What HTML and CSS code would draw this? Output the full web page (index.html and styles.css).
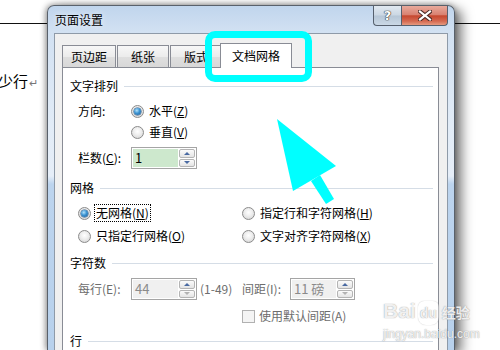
FILE: index.html
```html
<!DOCTYPE html>
<html lang="zh-CN">
<head>
<meta charset="utf-8">
<title>页面设置</title>
<link rel="stylesheet" href="styles.css">
</head>
<body>
<div class="doc">
  <div class="doc-rule"></div>
  <p class="doc-text">少行<span class="ret">↵</span></p>
</div>

<div class="dialog">
  <div class="titlebar">
    <span class="title">页面设置</span>
    <div class="caption">
      <span class="cap-btn help">?</span>
      <span class="cap-btn close">
        <svg width="14" height="11" viewBox="0 0 14 11"><path d="M2 1.5 L12 9.5 M12 1.5 L2 9.5" stroke="#4a2a26" stroke-width="4.2" stroke-linecap="square"/><path d="M2 1.5 L12 9.5 M12 1.5 L2 9.5" stroke="#ffffff" stroke-width="2.2" stroke-linecap="square"/></svg>
      </span>
    </div>
  </div>
  <div class="body">
    <div class="tabs">
      <span class="tab">页边距</span>
      <span class="tab">纸张</span>
      <span class="tab">版式</span>
      <span class="tab active">文档网格</span>
    </div>
    <div class="page">
      <div class="group g-text"><span>文字排列</span></div>
      <div class="row r-dir">
        <span class="lbl">方向:</span>
        <span class="radio checked"></span><span class="rtext">水平(<u>Z</u>)</span>
      </div>
      <div class="row r-vert">
        <span class="radio"></span><span class="rtext">垂直(<u>V</u>)</span>
      </div>
      <div class="row r-cols">
        <span class="lbl">栏数(<u>C</u>):</span>
        <div class="spin">
          <span class="spin-field hl">1</span>
          <span class="spin-btns"><span class="spin-btn"><i class="tri up"></i></span><span class="spin-btn"><i class="tri down"></i></span></span>
        </div>
      </div>

      <div class="group g-grid"><span>网格</span></div>
      <div class="row r-grid1">
        <div class="col1"><span class="radio checked"></span><span class="rtext focus">无网格(<u>N</u>)</span></div>
        <div class="col2"><span class="radio"></span><span class="rtext">指定行和字符网格(<u>H</u>)</span></div>
      </div>
      <div class="row r-grid2">
        <div class="col1"><span class="radio"></span><span class="rtext">只指定行网格(<u>O</u>)</span></div>
        <div class="col2"><span class="radio"></span><span class="rtext">文字对齐字符网格(<u>X</u>)</span></div>
      </div>

      <div class="group g-chars"><span>字符数</span></div>
      <div class="row r-chars disabled">
        <div class="col1">
          <span class="lbl">每行(E):</span>
          <div class="spin off">
            <span class="spin-field">44</span>
            <span class="spin-btns"><span class="spin-btn"><i class="tri up"></i></span><span class="spin-btn"><i class="tri down grey"></i></span></span>
          </div>
          <span class="range">(1-49)</span>
        </div>
        <div class="col2">
          <span class="lbl2">间距(I):</span>
          <div class="spin off narrow">
            <span class="spin-field">11 磅</span>
            <span class="spin-btns"><span class="spin-btn"><i class="tri up"></i></span><span class="spin-btn"><i class="tri down grey"></i></span></span>
          </div>
        </div>
      </div>
      <div class="row r-check disabled">
        <span class="check"></span><span class="ctext">使用默认间距(A)</span>
      </div>

      <div class="group g-lines"><span>行</span></div>
    </div>
  </div>
</div>

<div class="highlight"></div>
<svg class="arrow" width="500" height="350" viewBox="0 0 500 350">
  <polygon points="277,119 336,166 293,191" fill="#00ffff"/>
  <polygon points="311,181 320,175 334,199 326,204" fill="#00ffff"/>
</svg>

<div class="watermark">
  <div class="wm-top"><span>Bai</span><span class="wm-du">du</span><span class="wm-cn">经验</span></div>
  <div class="wm-url">jingyan.baidu.com</div>
</div>
</body>
</html>
```

FILE: styles.css
```css
* { box-sizing: border-box; }
html, body { margin: 0; padding: 0; }
body {
  width: 500px;
  height: 350px;
  overflow: hidden;
  position: relative;
  background: #fff;
  font-family: "Noto Sans CJK SC", "Microsoft YaHei", sans-serif;
  font-size: 12px;
  color: #000;
}

/* document behind the dialog */
.doc { padding-top: 23px; }
.doc-rule { height: 1px; background: #111; }
.doc-text {
  margin: 47px 0 0 -2px;
  font-size: 15px;
  line-height: 20px;
}
.ret { font-size: 11px; color: #777; margin-left: 1px; }

/* dialog window */
.dialog {
  position: absolute;
  left: 47px;
  top: 5px;
  width: 408px;
  height: 345px;
  border: 1px solid #59616b;
  border-bottom: 0;
  border-radius: 7px 7px 0 0;
  padding: 0 6px;
  display: flex;
  flex-direction: column;
  background: linear-gradient(180deg, #c0d5ed 0px, #d2e1f2 26px, #e2ecf7 120px, #e6eef8 170px, #bcd4ee 178px, #b8d1ec 100%);
  box-shadow: -1px 0 6px rgba(0,0,0,0.45), 7px 4px 12px rgba(0,0,0,0.5);
}
.titlebar {
  height: 27px;
  display: flex;
  justify-content: space-between;
  align-items: flex-start;
}
.title {
  padding: 7px 0 0 1px;
  line-height: 14px;
  text-shadow: 0 0 6px rgba(255,255,255,0.9);
}
.caption { display: flex; }
.cap-btn {
  height: 20px;
  display: flex;
  align-items: center;
  justify-content: center;
  border: 1px solid #56606e;
  border-top: 0;
}
.help {
  width: 28px;
  border-right: 0;
  border-radius: 0 0 0 4px;
  background: linear-gradient(180deg, #e1e9f1 0%, #cbd7e3 48%, #b6c6d6 52%, #cad8e6 100%);
  color: #fff;
  font-family: "DejaVu Sans", sans-serif;
  font-weight: bold;
  font-size: 13px;
  text-shadow: 0 0 1px #333, 0 0 1px #333, 0 0 1px #333;
}
.close {
  width: 47px;
  border-radius: 0 0 4px 0;
  background: linear-gradient(180deg, #e8aa9c 0%, #d98272 45%, #c6482f 52%, #d56a52 80%, #e59a80 100%);
}

.body {
  flex: 1;
  min-height: 0;
  display: flex;
  flex-direction: column;
  background: #f0f0f0;
  border: 1px solid #8e9aa8;
  border-bottom: 0;
  padding: 9px 8px 0 7px;
  overflow: hidden;
}

/* tabs */
.tabs {
  display: flex;
  align-items: flex-end;
  height: 24px;
  flex: none;
}
.tab {
  position: relative;
  height: 22px;
  min-width: 52px;
  padding: 0 8px;
  border: 1px solid #898c95;
  border-bottom: 0;
  text-align: center;
  line-height: 21px;
  background: linear-gradient(180deg, #f7f7f7 0%, #ececec 50%, #dfdfdf 51%, #d8d8d8 100%);
}
.tab + .tab { margin-left: 1px; }
.tab.active {
  height: 25px;
  margin-left: -2px;
  margin-bottom: -1px;
  padding: 1px 11px 0;
  line-height: 22px;
  background: #fff;
  z-index: 1;
}

.page {
  flex: 1;
  min-height: 0;
  overflow: hidden;
  background: #fff;
  border: 1px solid #898c95;
  border-bottom: 0;
  padding: 0 5px 0 7px;
}

/* group headings */
.group {
  display: flex;
  align-items: center;
  height: 20px;
  line-height: 20px;
}
.group::after {
  content: "";
  flex: 1;
  height: 1px;
  background: #d5dde6;
  margin-left: 6px;
}
.g-text { margin-top: 8px; }
.g-grid { margin-top: 9px; }
.g-chars { margin-top: 7px; }
.g-lines { margin-top: 5px; }

/* rows */
.row {
  display: flex;
  align-items: center;
  height: 20px;
  line-height: 16px;
  padding-left: 8px;
}
.r-dir { margin-top: 5px; }
.r-vert { margin-top: 1px; padding-left: 61px; }
.r-cols { margin-top: 5px; height: 22px; }
.r-grid1 { margin-top: 5px; }
.r-grid2 { margin-top: 3px; }
.r-chars { margin-top: 5px; height: 22px; }
.r-check { margin-top: 6px; padding-left: 172px; }

.lbl { width: 53px; }
.lbl2 { width: 48px; }
.col1 { width: 164px; display: flex; align-items: center; }
.col2 { display: flex; align-items: center; }

.disabled { color: #6d6d6d; }
.range { margin-left: 3px; }

/* radio buttons */
.radio {
  position: relative;
  flex: none;
  width: 13px;
  height: 13px;
  border-radius: 50%;
  border: 1px solid #8b8b8b;
  background: radial-gradient(circle at 50% 40%, #ffffff 0%, #ededed 45%, #cfcfcf 100%);
  margin-right: 3px;
}
.radio.checked::after {
  content: "";
  position: absolute;
  left: 2px;
  top: 2px;
  width: 7px;
  height: 7px;
  border-radius: 50%;
  background: radial-gradient(circle at 40% 35%, #b6e4fb 0%, #3b93d2 45%, #1d5a93 100%);
  box-shadow: 0 0 0 0.5px #27527c;
}
.rtext {
  padding: 0 1px;
  border: 1px dotted transparent;
}
.rtext.focus { border-color: #000; }

/* checkbox */
.check {
  width: 13px;
  height: 13px;
  border: 1px solid #b1b1b1;
  background: #f4f4f4;
  margin-right: 4px;
}

/* spin boxes */
.spin {
  display: flex;
  width: 66px;
  height: 22px;
  padding: 1px;
  gap: 1px;
  border: 1px solid #a5a5a5;
  background: #fff;
}
.spin.narrow { width: 65px; }
.spin-field {
  flex: 1;
  padding-left: 2px;
  line-height: 18px;
  font-size: 13px;
}
.spin-field.hl { background: #cde8cd; color: #000; }
.spin.off .spin-field { background: #f0f0f0; color: #8a8a8a; }
.spin-btns {
  width: 16px;
  display: flex;
  flex-direction: column;
  gap: 1px;
}
.spin-btn {
  flex: 1;
  display: flex;
  align-items: center;
  justify-content: center;
  border: 1px solid #b4b4b4;
  border-radius: 2px;
  background: linear-gradient(180deg, #fbfbfb, #e4e4e4);
}
.tri {
  width: 0;
  height: 0;
  border-left: 3.5px solid transparent;
  border-right: 3.5px solid transparent;
}
.tri.up { border-bottom: 3px solid #4a6aa2; }
.tri.down { border-top: 3px solid #4a6aa2; }
.tri.down.grey { border-top-color: #b2b2b2; }

/* annotations */
.highlight {
  position: absolute;
  left: 205px;
  top: 31px;
  width: 107px;
  height: 51px;
  border: 7px solid #00ffff;
  border-radius: 10px;
}
.arrow {
  position: absolute;
  left: 0;
  top: 0;
}

/* watermark */
.watermark {
  position: absolute;
  left: 383px;
  top: 299px;
  color: rgba(255,255,255,0.85);
  text-shadow: 0 0 1px rgba(130,130,130,0.55), 0 0 1px rgba(130,130,130,0.55);
  font-family: "Liberation Sans", sans-serif;
}
.wm-top {
  display: flex;
  align-items: baseline;
  font-size: 21px;
  font-weight: bold;
  line-height: 24px;
}
.wm-du {
  font-size: 14px;
  margin: 0 3px 0 2px;
  padding: 0 2px;
  border-radius: 6px 6px 8px 8px;
  background: rgba(255,255,255,0.4);
  box-shadow: 0 0 1px rgba(130,130,130,0.6);
}
.wm-cn {
  font-family: "Noto Sans CJK SC", sans-serif;
  font-size: 14px;
}
.wm-url {
  font-size: 12px;
  line-height: 14px;
  margin-top: 2px;
}
```
